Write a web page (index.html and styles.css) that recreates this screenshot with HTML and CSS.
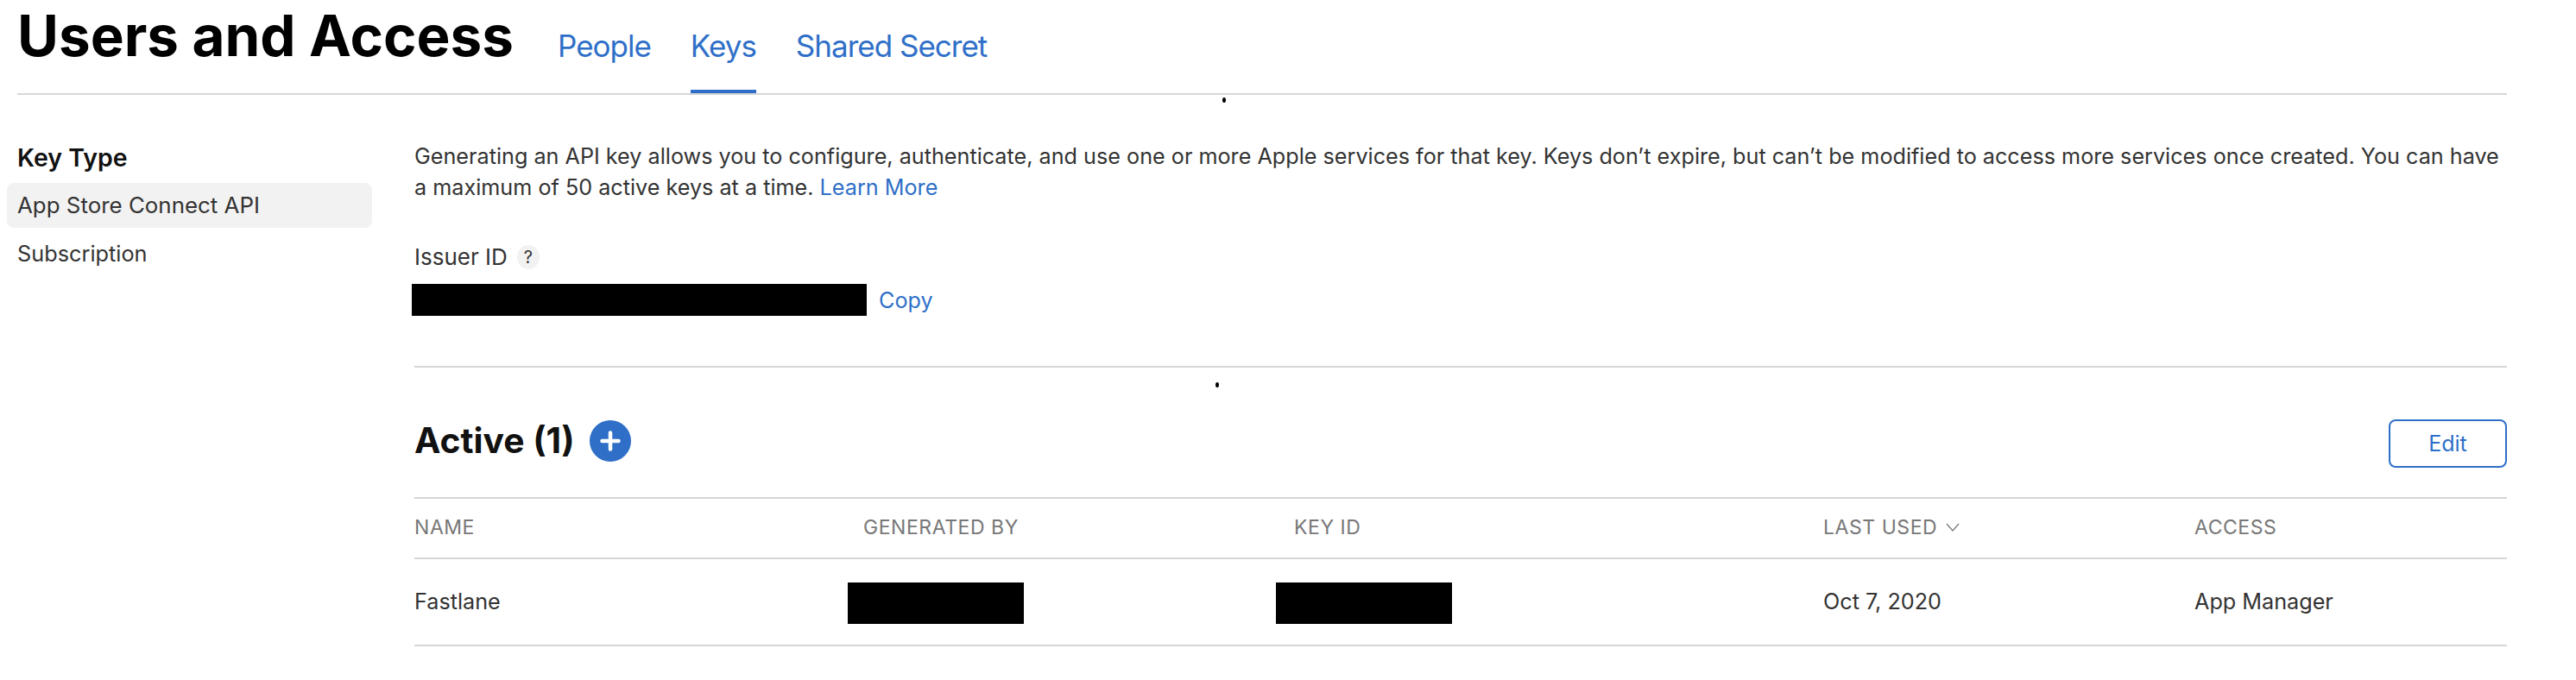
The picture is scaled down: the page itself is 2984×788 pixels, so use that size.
FILE: index.html
```html
<!DOCTYPE html>
<html lang="en">
<head>
    <meta charset="UTF-8">
    <meta name="viewport" content="width=device-width, initial-scale=1.0">
    <title>Users and Access</title>
    <link rel="stylesheet" href="styles.css">
</head>
<body>
    <header class="page-header">
        <h1>Users and Access</h1>
        <nav class="tabs">
            <a href="#">People</a>
            <a href="#" class="active">Keys</a>
            <a href="#">Shared Secret</a>
        </nav>
    </header>
    <span class="speck speck-top"></span>

    <div class="content">
        <aside class="sidebar">
            <h2>Key Type</h2>
            <a href="#" class="side-item selected">App Store Connect API</a>
            <a href="#" class="side-item">Subscription</a>
        </aside>

        <main class="main">
            <section class="intro">
                <p>Generating an API key allows you to configure, authenticate, and use one or more Apple services for that key. Keys don’t expire, but can’t be modified to access more services once created. You can have a maximum of 50 active keys at a time. <a href="#">Learn More</a></p>
                <div class="issuer-label">Issuer ID <span class="help">?</span></div>
                <div class="issuer-value">
                    <span class="redacted redacted-issuer"></span>
                    <a href="#">Copy</a>
                </div>
            </section>

            <section class="keys">
                <span class="speck speck-keys"></span>
                <div class="keys-head">
                    <h2>Active (1)</h2>
                    <button class="add" aria-label="Add key">
                        <svg width="48" height="48" viewBox="0 0 48 48"><circle cx="24" cy="24" r="24" fill="#2f6fc8"/><path d="M24 14.5v19M14.5 24h19" stroke="#fff" stroke-width="4.5" stroke-linecap="round"/></svg>
                    </button>
                    <button class="edit">Edit</button>
                </div>
                <div class="table">
                    <div class="row head">
                        <div>Name</div>
                        <div>Generated By</div>
                        <div>Key ID</div>
                        <div class="sorted">Last Used
                            <svg width="16" height="10" viewBox="0 0 16 10"><path d="M1 1l7 8 7-8" fill="none" stroke="#777" stroke-width="1.2"/></svg>
                        </div>
                        <div>Access</div>
                    </div>
                    <div class="row body">
                        <div>Fastlane</div>
                        <div><span class="redacted redacted-by"></span></div>
                        <div><span class="redacted redacted-id"></span></div>
                        <div>Oct 7, 2020</div>
                        <div>App Manager</div>
                    </div>
                </div>
            </section>
        </main>
    </div>
</body>
</html>
```

FILE: styles.css
```css
* {
    box-sizing: border-box;
}
body {
    position: relative;
    margin: 0;
    padding: 0 80px 0 20px;
    background-color: #fff;
    color: #333;
    font-family: Inter, "Liberation Sans", sans-serif;
    font-size: 25.2px;
    line-height: 36px;
}
a {
    color: #2f6fc8;
    text-decoration: none;
}
.page-header {
    display: flex;
    align-items: flex-start;
    height: 110px;
    border-bottom: 2px solid #d6d6d6;
}
h1 {
    margin: 0;
    color: #000;
    font-size: 65.5px;
    font-weight: 700;
    line-height: 84px;
}
.tabs {
    display: flex;
    gap: 46px;
    height: 108px;
    margin-left: 51px;
}
.tabs a {
    padding-top: 31px;
    font-size: 35px;
    letter-spacing: -1px;
    line-height: 44px;
}
.tabs a.active {
    border-bottom: 4px solid #2f6fc8;
}
.speck {
    position: absolute;
    width: 4px;
    height: 6px;
    border-radius: 50%;
    background-color: #000;
}
.speck-top {
    left: 1416px;
    top: 113px;
}
.speck-keys {
    left: 1408px;
    top: 443px;
}
.content {
    display: flex;
}
.sidebar {
    flex: none;
    width: 460px;
    padding-top: 55px;
}
.sidebar h2 {
    margin: 0 0 11px;
    color: #111;
    font-size: 28.5px;
    font-weight: 600;
    line-height: 36px;
}
.side-item {
    display: block;
    width: 423px;
    height: 52px;
    margin: 0 0 4px -12px;
    padding-left: 12px;
    border-radius: 8px;
    color: #333;
    font-size: 25.3px;
    line-height: 52px;
}
.side-item.selected {
    background-color: #f2f2f2;
    font-size: 25.9px;
}
.main {
    flex: 1;
    min-width: 0;
}
.intro {
    height: 316px;
    padding-top: 53px;
    border-bottom: 2px solid #d6d6d6;
}
.intro p {
    margin: 0;
}
.issuer-label {
    display: flex;
    align-items: center;
    gap: 11px;
    margin-top: 45px;
    font-size: 26px;
}
.help {
    width: 26px;
    height: 28px;
    border-radius: 50%;
    background-color: #f2f2f2;
    font-size: 20px;
    line-height: 28px;
    text-align: center;
}
.issuer-value {
    display: flex;
    align-items: center;
    gap: 14px;
    margin-top: 13px;
}
.redacted {
    display: block;
    background-color: #000;
}
.redacted-issuer {
    width: 527px;
    height: 37px;
    margin-left: -3px;
}
.redacted-by {
    width: 204px;
    height: 48px;
    margin: 4px 0 0 -18px;
}
.redacted-id {
    width: 204px;
    height: 48px;
    margin: 4px 0 0 -21px;
}
.keys-head {
    display: flex;
    align-items: center;
    height: 150px;
    padding-top: 20px;
}
.keys-head h2 {
    margin: 0 17px 3px 0;
    color: #111;
    font-size: 40.8px;
    font-weight: 700;
}
.add {
    width: 48px;
    height: 48px;
    padding: 0;
    border: none;
    background: none;
}
.add svg {
    display: block;
}
.edit {
    width: 137px;
    height: 56px;
    margin: 6px 0 0 auto;
    border: 2px solid #2f6fc8;
    border-radius: 8px;
    background-color: #fff;
    color: #2f6fc8;
    font-family: inherit;
    font-size: 25px;
}
.table {
    border-top: 2px solid #d6d6d6;
}
.row {
    display: grid;
    grid-template-columns: 520px 499px 613px 430px 1fr;
    align-items: center;
    border-bottom: 2px solid #d6d6d6;
}
.row.head {
    height: 70px;
    color: #777;
    font-size: 23px;
    letter-spacing: 0.55px;
    line-height: 32px;
    padding-bottom: 2px;
    text-transform: uppercase;
}
.row.body {
    height: 101px;
}
.row.body > div {
    padding-bottom: 2px;
}
.sorted {
    display: flex;
    align-items: center;
    gap: 10px;
}
```
